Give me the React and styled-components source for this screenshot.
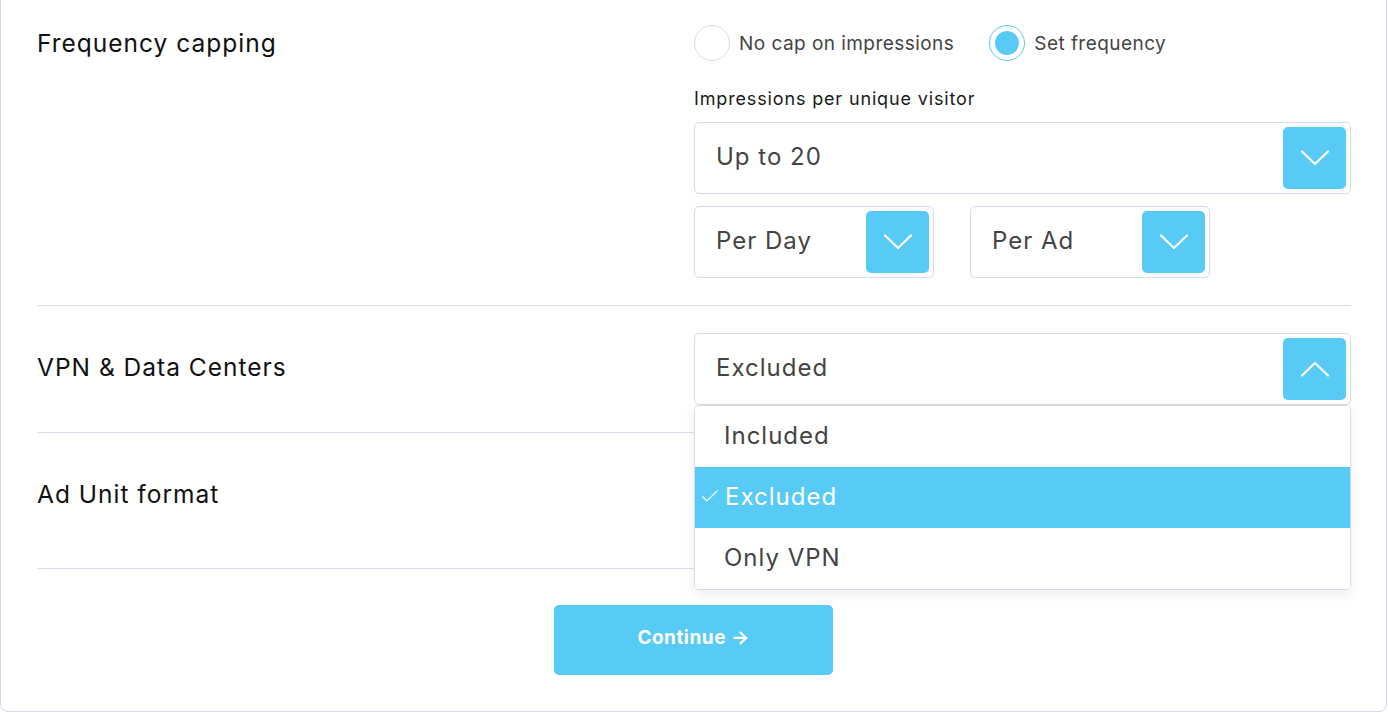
import React from "react";
import styled, { createGlobalStyle } from "styled-components";

const Global = createGlobalStyle`
  html, body { margin: 0; padding: 0; background: #fff; }
  body { font-family: Inter, "Noto Sans", sans-serif; -webkit-font-smoothing: antialiased; }
  * { box-sizing: border-box; }
`;

const Card = styled.div`
  width: 1387px;
  height: 712px;
  border: 1px solid #d5dbe8;
  border-top: none;
  border-radius: 0 0 8px 8px;
  padding: 25px 35px 0 36px;
  background: #fff;
  overflow: hidden;
`;

const Row = styled.div`
  display: grid;
  grid-template-columns: 657px 657px;
  align-items: start;
  padding: ${(p) => p.$pad || "27px 0 27px"};
  border-bottom: 1px solid #d5dde8;
  position: relative;
  z-index: ${(p) => p.$z || 1};
`;

const Label = styled.div`
  font-size: 24.5px;
  color: #111;
  line-height: ${(p) => p.$lh}px;
  letter-spacing: 1px;
`;

const Controls = styled.div`
  display: flex;
  flex-direction: column;
`;

const RadioGroup = styled.div`
  display: flex;
  align-items: center;
  gap: 35px;
  height: 36px;
`;

const RadioItem = styled.label`
  display: flex;
  align-items: center;
  gap: 9px;
  font-size: 19px;
  letter-spacing: 0.45px;
  color: #444;
`;

const RadioCircle = styled.span`
  width: 36px;
  height: 36px;
  border-radius: 50%;
  border: 1px solid ${(p) => (p.$on ? "#57cbf5" : "#d5dbe8")};
  display: flex;
  align-items: center;
  justify-content: center;
  &::after {
    content: "";
    width: 24px;
    height: 24px;
    border-radius: 50%;
    background: ${(p) => (p.$on ? "#57cbf5" : "transparent")};
  }
`;

const Caption = styled.div`
  font-size: 18px;
  color: #1a1a1a;
  letter-spacing: 0.85px;
  line-height: 26px;
  margin: 25px 0 10px;
`;

const SelectWrap = styled.div`
  position: relative;
  width: ${(p) => p.$w || "657px"};
`;

const SelectBox = styled.div`
  height: 72px;
  border: 1px solid #d5dbe8;
  border-radius: 5px;
  display: flex;
  align-items: center;
  justify-content: space-between;
  padding: 0 4px 0 21px;
  background: #fff;
`;

const SelectText = styled.span`
  font-size: 24px;
  letter-spacing: 1px;
  color: #444;
  padding-bottom: 3px;
`;

const ArrowBtn = styled.span`
  width: 63px;
  height: 62px;
  border-radius: 5px;
  background: #57cbf5;
  display: flex;
  align-items: center;
  justify-content: center;
`;

const SmallRow = styled.div`
  display: flex;
  gap: 36px;
  margin-top: 12px;
`;

const Menu = styled.div`
  position: absolute;
  top: 100%;
  left: 0;
  right: 0;
  background: #fff;
  border: 1px solid #d5dbe8;
  border-radius: 5px;
  box-shadow: 0 4px 12px rgba(30, 40, 70, 0.08);
  overflow: hidden;
  z-index: 10;
`;

const MenuItem = styled.div`
  height: 61px;
  display: flex;
  align-items: center;
  padding-left: ${(p) => (p.$sel ? "6px" : "29px")};
  padding-bottom: 3px;
  font-size: 24px;
  letter-spacing: 1px;
  color: ${(p) => (p.$sel ? "#fff" : "#444")};
  background: ${(p) => (p.$sel ? "#57cbf5" : "#fff")};
  gap: 6px;
`;

const Spacer = styled.div`
  height: 81px;
`;

const Footer = styled.div`
  display: flex;
  justify-content: center;
  padding-top: 36px;
`;

const Continue = styled.button`
  width: 279px;
  height: 70px;
  border: none;
  border-radius: 5px;
  background: #57cbf5;
  color: #fff;
  font-family: Inter, sans-serif;
  font-weight: 700;
  font-size: 19px;
  letter-spacing: 0.5px;
  padding-bottom: 6px;
  margin-left: -1px;
  cursor: pointer;
`;

const Chevron = ({ up }) => (
  <svg width="30" height="16" viewBox="0 0 30 16" fill="none">
    <path
      d={up ? "M2 14.5 L15 2 L28 14.5" : "M2 1.5 L15 14 L28 1.5"}
      stroke="#fff"
      strokeWidth="2.2"
      strokeLinecap="round"
      strokeLinejoin="round"
    />
  </svg>
);

const Check = () => (
  <svg width="18" height="14" viewBox="0 0 18 14" fill="none">
    <path d="M1.5 7.5 L6 12 L16.5 1.5" stroke="#fff" strokeWidth="1.2" />
  </svg>
);

const Select = ({ value, w, up, children }) => (
  <SelectWrap $w={w}>
    <SelectBox>
      <SelectText>{value}</SelectText>
      <ArrowBtn>
        <Chevron up={up} />
      </ArrowBtn>
    </SelectBox>
    {children}
  </SelectWrap>
);

export default function App() {
  return (
    <>
      <Global />
      <Card>
        <Row $pad="0 0 27px">
          <Label $lh={36}>Frequency capping</Label>
          <Controls>
            <RadioGroup>
              <RadioItem>
                <RadioCircle />
                No cap on impressions
              </RadioItem>
              <RadioItem>
                <RadioCircle $on />
                Set frequency
              </RadioItem>
            </RadioGroup>
            <Caption>Impressions per unique visitor</Caption>
            <Select value="Up to 20" />
            <SmallRow>
              <Select value="Per Day" w="240px" />
              <Select value="Per Ad" w="240px" />
            </SmallRow>
          </Controls>
        </Row>
        <Row $z={5}>
          <Label $lh={68}>VPN &amp; Data Centers</Label>
          <Controls>
            <Select value="Excluded" up>
              <Menu>
                <MenuItem>Included</MenuItem>
                <MenuItem $sel>
                  <Check />
                  Excluded
                </MenuItem>
                <MenuItem>Only VPN</MenuItem>
              </Menu>
            </Select>
          </Controls>
        </Row>
        <Row>
          <Label $lh={68}>Ad Unit format</Label>
          <Spacer />
        </Row>
        <Footer>
          <Continue>Continue →</Continue>
        </Footer>
      </Card>
    </>
  );
}
